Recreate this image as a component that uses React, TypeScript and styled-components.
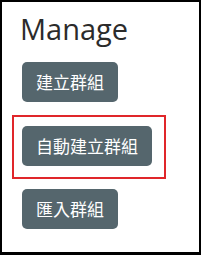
import React from "react";
import styled, { createGlobalStyle } from "styled-components";

const Global = createGlobalStyle`
  html, body { margin: 0; padding: 0; background: #fff; }
  body { font-family: "Open Sans", "Noto Sans CJK TC", sans-serif; }
`;

const Frame = styled.div`
  box-sizing: border-box;
  width: 201px;
  height: 255px;
  border: 2px solid #000;
  border-bottom-width: 3px;
  padding: 7px 0 0 20px;
  display: flex;
  flex-direction: column;
  align-items: flex-start;
`;

const Title = styled.h1`
  margin: 0 0 0 -2px;
  font-family: "Open Sans", sans-serif;
  font-weight: 400;
  font-size: 29px;
  line-height: 40px;
  color: #2b2b2b;
`;

const Button = styled.button`
  box-sizing: border-box;
  height: 40px;
  padding: 0 14px;
  border: none;
  border-radius: 5px;
  background: #55666d;
  color: #fff;
  font-family: "Noto Sans CJK TC", sans-serif;
  font-size: 17px;
  line-height: 40px;
  cursor: pointer;
`;

const Highlight = styled.div`
  box-sizing: border-box;
  margin: 13px 0 10px -10px;
  border: 2px solid #e0262a;
  padding: 9px 12px 11px 8px;
  display: flex;
`;

const Stack = styled.div`
  margin-top: 13px;
  display: flex;
  flex-direction: column;
  align-items: flex-start;
`;

export default function App() {
  return (
    <>
      <Global />
      <Frame>
        <Title>Manage</Title>
        <Stack>
          <Button>建立群組</Button>
          <Highlight>
            <Button>自動建立群組</Button>
          </Highlight>
          <Button>匯入群組</Button>
        </Stack>
      </Frame>
    </>
  );
}
